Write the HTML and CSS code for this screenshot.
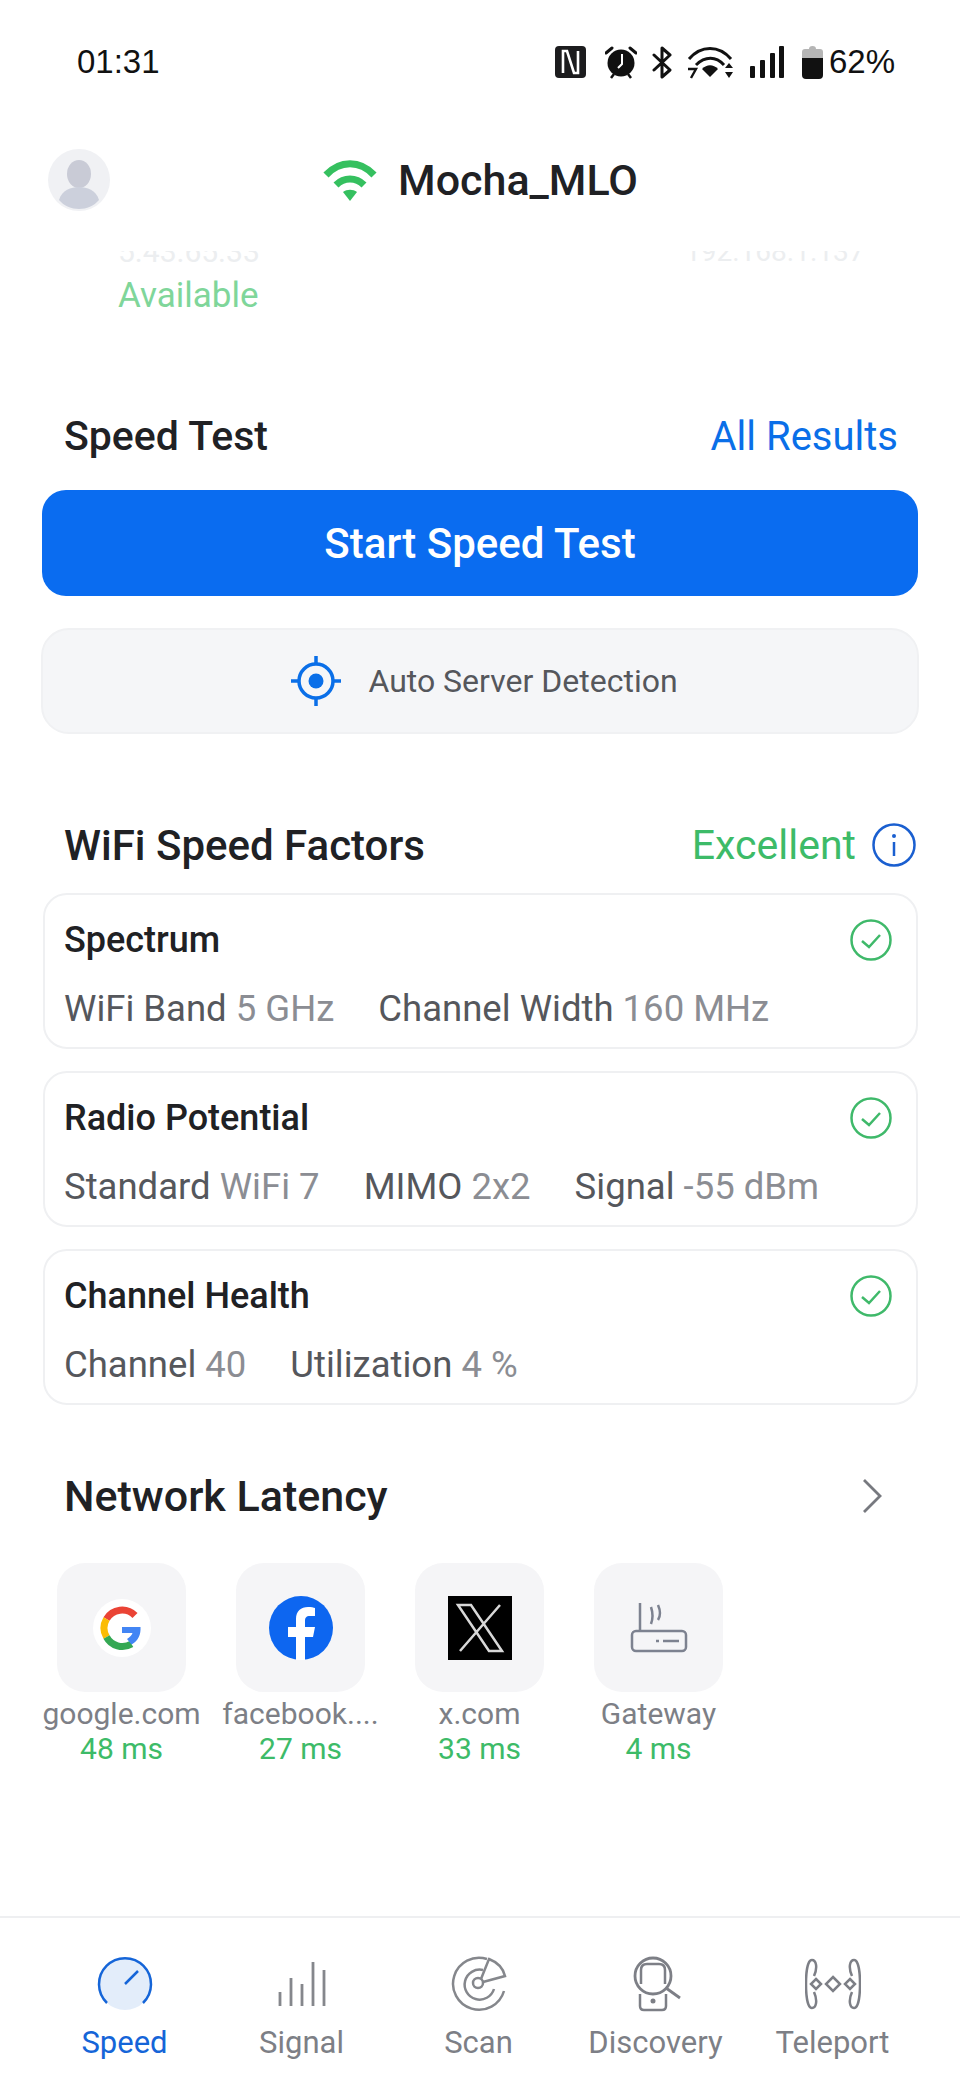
FILE: index.html
```html
<!DOCTYPE html>
<html lang="en">
<head>
    <meta charset="UTF-8">
    <title>Speed</title>
    <link rel="stylesheet" href="styles.css">
</head>
<body>
<div id="page-container">
    <div class="status-bar">
        <span class="clock">01:31</span>
        <div class="status-icons">
            <svg class="nfc" width="31" height="32" viewBox="0 0 31 32"><rect width="31" height="32" rx="4" fill="#1c1c1e"/><path d="M8 27V5h4l7 22h4V5" fill="none" stroke="#fff" stroke-width="2.6"/></svg>
            <svg class="alarm" width="32" height="33" viewBox="0 0 32 33"><path d="M1 7l6-5M31 7l-6-5" stroke="#111" stroke-width="3" stroke-linecap="round"/><circle cx="16" cy="17" r="13.5" fill="#111"/><path d="M6 32l3-4M26 32l-3-4" stroke="#111" stroke-width="2.5"/><path d="M17 8v10l-4 4" stroke="#fff" stroke-width="2" fill="none"/></svg>
            <svg class="bt" width="21" height="33" viewBox="0 0 21 33"><path d="M2 9l16 15-8 7V2l8 7L2 24" fill="none" stroke="#111" stroke-width="3" stroke-linejoin="round" stroke-linecap="round"/></svg>
            <svg class="wifi7" width="50" height="33" viewBox="0 0 50 33"><path d="M2 13C14 -1 32 -1 44 13M9 19c9-9 20-9 28 0" fill="none" stroke="#111" stroke-width="3"/><path d="M15 23c5-5 11-5 16 0l-8 8z" fill="#111"/><path d="M38 22l4-5 4 5zM38 26l4 6 4-6z" fill="#111"/><path d="M1 23h8l-5 9" fill="none" stroke="#111" stroke-width="2.4"/></svg>
            <svg class="signal" width="34" height="32" viewBox="0 0 34 32"><rect y="20" width="5" height="12" rx="1" fill="#111"/><rect x="10" y="14" width="5" height="18" rx="1" fill="#111"/><rect x="20" y="7" width="5" height="25" rx="1" fill="#111"/><rect x="29" width="5" height="32" rx="1" fill="#111"/></svg>
            <svg class="battery" width="21" height="34" viewBox="0 0 21 34"><path d="M0 13V7q0-3 3-3h4q0-3 3.500-3t3.500 3h4q3 0 3 3v6z" fill="#b5b5b5"/><path d="M0 13h21v17q0 4-4 4H4q-4 0-4-4z" fill="#111"/></svg>
            <span class="percent">62%</span>
        </div>
    </div>

    <div class="top-bar">
        <div class="avatar">
            <svg width="62" height="62" viewBox="0 0 62 62"><circle cx="31" cy="31" r="31" fill="#f0f1f4"/><ellipse cx="31" cy="25" rx="12" ry="14" fill="#c9cbd6"/><path d="M11 51c3-10 12-13 20-13s17 3 20 13c-10 12-30 12-40 0z" fill="#ccd0dc"/></svg>
        </div>
        <div class="network-name">
            <svg width="56" height="42" viewBox="0 0 56 42"><path d="M4 16c14-15 34-15 48 0" fill="none" stroke="#35c05f" stroke-width="7"/><path d="M14 26c8-8 20-8 28 0" fill="none" stroke="#35c05f" stroke-width="7"/><path d="M21 33c4-3 10-3 14 0l-7 9z" fill="#35c05f"/></svg>
            <span>Mocha_MLO</span>
        </div>
    </div>

    <div class="peek">
        <div class="peek-col peek-left">
            <span class="peek-ip">5.43.65.33</span>
            <span class="peek-state">Available</span>
        </div>
        <div class="peek-col peek-right">
            <span class="peek-ip">192.168.1.137</span>
        </div>
    </div>

    <div class="section-head speed-head">
        <h2>Speed Test</h2>
        <span class="link">All Results</span>
    </div>
    <button class="start-btn">Start Speed Test</button>
    <div class="server-row">
        <svg width="52" height="52" viewBox="0 0 52 52"><circle cx="26" cy="26" r="17" fill="none" stroke="#0a6fe8" stroke-width="3.500"/><circle cx="26" cy="26" r="7.500" fill="#0a6fe8"/><path d="M26 1v9M26 42v9M1 26h9M42 26h9" stroke="#0a6fe8" stroke-width="3.500"/></svg>
        <span>Auto Server Detection</span>
    </div>

    <div class="section-head factors-head">
        <h2>WiFi Speed Factors</h2>
        <div class="rating">
            <span>Excellent</span>
            <svg width="44" height="44" viewBox="0 0 44 44"><circle cx="22" cy="22" r="20.500" fill="none" stroke="#1a5fd0" stroke-width="2.500"/><circle cx="22" cy="13" r="2" fill="#1a5fd0"/><path d="M22 19v14" stroke="#1a5fd0" stroke-width="2.500"/></svg>
        </div>
    </div>

    <div class="cards">
        <div class="card">
            <div class="card-title">
                <h3>Spectrum</h3>
                <svg class="check" width="42" height="42" viewBox="0 0 42 42"><circle cx="21" cy="21" r="19.500" fill="none" stroke="#3fb96a" stroke-width="2.500"/><path d="M12 22l7 6 11-12" fill="none" stroke="#3fb96a" stroke-width="2.500"/></svg>
            </div>
            <div class="card-stats">
                <span>WiFi Band <em>5 GHz</em></span>
                <span>Channel Width <em>160 MHz</em></span>
            </div>
        </div>
        <div class="card">
            <div class="card-title">
                <h3>Radio Potential</h3>
                <svg class="check" width="42" height="42" viewBox="0 0 42 42"><circle cx="21" cy="21" r="19.500" fill="none" stroke="#3fb96a" stroke-width="2.500"/><path d="M12 22l7 6 11-12" fill="none" stroke="#3fb96a" stroke-width="2.500"/></svg>
            </div>
            <div class="card-stats">
                <span>Standard <em>WiFi 7</em></span>
                <span>MIMO <em>2x2</em></span>
                <span>Signal <em>-55 dBm</em></span>
            </div>
        </div>
        <div class="card">
            <div class="card-title">
                <h3>Channel Health</h3>
                <svg class="check" width="42" height="42" viewBox="0 0 42 42"><circle cx="21" cy="21" r="19.500" fill="none" stroke="#3fb96a" stroke-width="2.500"/><path d="M12 22l7 6 11-12" fill="none" stroke="#3fb96a" stroke-width="2.500"/></svg>
            </div>
            <div class="card-stats">
                <span>Channel <em>40</em></span>
                <span>Utilization <em>4 %</em></span>
            </div>
        </div>
    </div>

    <div class="section-head latency-head">
        <h2>Network Latency</h2>
        <svg width="24" height="38" viewBox="0 0 24 38"><path d="M4 3l16 16L4 35" fill="none" stroke="#77797f" stroke-width="2.800"/></svg>
    </div>

    <div class="latency-grid">
        <div class="latency-item">
            <div class="tile">
                <svg width="58" height="58" viewBox="0 0 58 58"><circle cx="29" cy="29" r="29" fill="#fff"/><path d="M42 16.500A18 18 0 0 0 13.500 20" fill="none" stroke="#ea4335" stroke-width="7"/><path d="M13.500 20a18 18 0 0 0 0 18" fill="none" stroke="#fbbc05" stroke-width="7"/><path d="M13.500 38a18 18 0 0 0 25 7" fill="none" stroke="#34a853" stroke-width="7"/><path d="M29 28h18.500c.500 7-2 14-9 17.500l-4.500-5.500c3-2 5-4 5.500-6H29z" fill="#4285f4"/></svg>
            </div>
            <span class="host">google.com</span>
            <span class="ms">48 ms</span>
        </div>
        <div class="latency-item">
            <div class="tile">
                <svg width="64" height="64" viewBox="0 0 64 64"><circle cx="32" cy="32" r="32" fill="#0d66f0"/><path d="M27 64V41h-8V31h8v-8c0-8 5-12 12-12 3 0 6 .500 7 1v8h-5c-4 0-5 2-5 5v6h10l-2 10h-8v23z" fill="#fff"/></svg>
            </div>
            <span class="host">facebook....</span>
            <span class="ms">27 ms</span>
        </div>
        <div class="latency-item">
            <div class="tile">
                <svg width="64" height="64" viewBox="0 0 64 64"><rect width="64" height="64" fill="#000"/><path d="M10 9h13l31 46H41zM52 9L12 55" fill="none" stroke="#d8d8d8" stroke-width="2.500"/></svg>
            </div>
            <span class="host">x.com</span>
            <span class="ms">33 ms</span>
        </div>
        <div class="latency-item">
            <div class="tile">
                <svg width="58" height="54" viewBox="0 0 58 54"><rect x="2" y="30" width="54" height="20" rx="4" fill="none" stroke="#7d8290" stroke-width="2.500"/><path d="M10 30V2M21 6q3 9 0 17M28 4q4 9 0 15" fill="none" stroke="#7d8290" stroke-width="2.500"/><path d="M26 40h3M33 40h16" stroke="#7d8290" stroke-width="2.500"/></svg>
            </div>
            <span class="host">Gateway</span>
            <span class="ms">4 ms</span>
        </div>
    </div>

    <div class="tab-bar">
        <div class="tab active">
            <svg width="56" height="56" viewBox="0 0 56 56"><circle cx="28" cy="28" r="26" fill="#e3edfa"/><path d="M10 47A26 26 0 1 1 46 47" fill="none" stroke="#1565d8" stroke-width="2.500"/><path d="M28 28l13-13" stroke="#1565d8" stroke-width="2.500"/></svg>
            <span>Speed</span>
        </div>
        <div class="tab">
            <svg width="50" height="44" viewBox="0 0 50 44"><path d="M4 30v14M15 16v28M26 22v22M37 0v44M48 8v36" stroke="#85878c" stroke-width="2.800" transform="translate(-1 0)"/></svg>
            <span>Signal</span>
        </div>
        <div class="tab">
            <svg width="56" height="56" viewBox="0 0 56 56"><path d="M36 3A26 26 0 1 0 53 35" fill="none" stroke="#85878c" stroke-width="2.500"/><path d="M32 14A15 15 0 1 0 43 33" fill="none" stroke="#85878c" stroke-width="2.500"/><circle cx="27" cy="27" r="5" fill="none" stroke="#85878c" stroke-width="2.500"/><path d="M30 23L38 3q13 5 16 17L32 26" fill="none" stroke="#85878c" stroke-width="2.500"/></svg>
            <span>Scan</span>
        </div>
        <div class="tab">
            <svg width="50" height="56" viewBox="0 0 50 56"><circle cx="22" cy="20" r="18" fill="none" stroke="#7d7f86" stroke-width="2.800"/><path d="M10 28V14q0-6 6-6h12q6 0 6 6v14" fill="none" stroke="#7d7f86" stroke-width="2.500"/><path d="M9 38v12q0 4 4 4h18q4 0 4-4V38" fill="none" stroke="#7d7f86" stroke-width="2.500"/><circle cx="22" cy="45" r="2.500" fill="#7d7f86"/><path d="M35 32l14 10" stroke="#7d7f86" stroke-width="2.800"/></svg>
            <span>Discovery</span>
        </div>
        <div class="tab">
            <svg width="56" height="50" viewBox="0 0 56 50"><path d="M9 17C13 8 11 1 7 1S1 11 1 25s2 24 6 24 6-7 2-16" fill="none" stroke="#7d7f86" stroke-width="2.500"/><path d="M47 17C43 8 45 1 49 1s6 10 6 24-2 24-6 24-6-7-2-16" fill="none" stroke="#7d7f86" stroke-width="2.500"/><path d="M11 20l5 5-5 5-5-5zM45 20l5 5-5 5-5-5zM28 18l7 7-7 7-7-7z" fill="none" stroke="#7d7f86" stroke-width="2.500"/></svg>
            <span>Teleport</span>
        </div>
    </div>
</div>
</body>
</html>
```

FILE: styles.css
```css
* {
    box-sizing: border-box;
}

body {
    margin: 0;
    background-color: #ffffff;
    color: #202124;
    font-family: Roboto, "Noto Sans", sans-serif;
}

#page-container {
    display: flex;
    flex-flow: column nowrap;
    width: 960px;
    height: 2092px;
    overflow: hidden;
}

/* status bar */
.status-bar {
    display: flex;
    justify-content: space-between;
    align-items: center;
    height: 34px;
    margin-top: 45px;
    padding: 0 65px 0 77px;
    font-family: "Liberation Sans", sans-serif;
    font-size: 33px;
    color: #111111;
}

.status-icons {
    display: flex;
    align-items: center;
}

.nfc,
.alarm,
.bt,
.wifi7,
.signal,
.battery {
    flex: none;
}

.alarm {
    margin-left: 19px;
}

.bt {
    margin-left: 15px;
}

.wifi7 {
    margin-left: 14px;
}

.signal {
    margin-left: 13px;
}

.battery {
    margin-left: 18px;
}

.percent {
    margin-left: 6px;
}

/* top bar */
.top-bar {
    display: grid;
    grid-template-columns: 1fr auto 1fr;
    align-items: center;
    height: 62px;
    margin-top: 70px;
    padding-left: 48px;
}

.avatar {
    height: 62px;
}

.network-name {
    display: flex;
    align-items: center;
    gap: 20px;
    font-size: 43px;
    font-weight: 500;
    margin-left: -48px;
}

/* list scrolled under the header */
.peek {
    display: flex;
    height: 72px;
    margin-top: 40px;
    overflow: hidden;
    font-size: 35px;
}

.peek-col {
    display: flex;
    flex-flow: column nowrap;
    align-items: flex-start;
}

.peek-left {
    padding-left: 118px;
    width: 685px;
}

.peek-ip {
    height: 31px;
    line-height: 30px;
    margin-top: -14px;
    color: #eceef0;
    font-size: 30px;
}

.peek-right .peek-ip {
    font-size: 28px;
}

.peek-state {
    line-height: 46px;
    margin-top: 5px;
    color: #7fd69a;
}

/* sections */
.section-head {
    display: flex;
    justify-content: space-between;
    align-items: center;
    padding: 0 64px;
}

.section-head h2 {
    margin: 0;
    font-size: 41px;
    font-weight: 500;
    color: #202124;
}

.speed-head {
    height: 50px;
    margin-top: 88px;
    padding-right: 62px;
}

.link {
    font-size: 40px;
    color: #0a6fe8;
}

.start-btn {
    height: 106px;
    margin: 29px 42px 0 42px;
    border: none;
    border-radius: 24px;
    background-color: #0a6cf0;
    color: #ffffff;
    font-family: inherit;
    font-size: 42px;
    font-weight: 500;
}

.server-row {
    display: flex;
    justify-content: center;
    align-items: center;
    gap: 26px;
    height: 106px;
    margin: 32px 41px 0 41px;
    padding-left: 8px;
    border: 2px solid #f0f1f3;
    border-radius: 28px;
    background-color: #f5f6f8;
    font-size: 32px;
    color: #55575c;
}

.factors-head {
    height: 50px;
    margin-top: 86px;
    padding-right: 44px;
}

.factors-head h2 {
    font-size: 42px;
}

.rating {
    display: flex;
    align-items: center;
    gap: 16px;
    font-size: 41px;
    color: #3dbb68;
}

.cards {
    display: flex;
    flex-flow: column nowrap;
    gap: 22px;
    margin: 23px 42px 0 43px;
}

.card {
    height: 156px;
    padding: 24px 24px 0 19px;
    border: 2px solid #eff0f2;
    border-radius: 24px;
}

.card-title {
    display: flex;
    justify-content: space-between;
    align-items: center;
    height: 42px;
}

.card-title h3 {
    margin: 0;
    font-size: 36px;
    font-weight: 500;
    color: #202124;
}

.card-stats {
    display: flex;
    gap: 44px;
    margin-top: 26px;
    font-size: 36.500px;
    color: #55575c;
}

.card-stats em {
    font-style: normal;
    color: #8b8d93;
}

.latency-head {
    height: 50px;
    margin-top: 66px;
    padding-right: 76px;
}

.latency-head h2 {
    font-size: 43px;
}

.latency-grid {
    display: grid;
    grid-template-columns: repeat(4, 179px);
    margin-top: 42px;
    padding-left: 32px;
}

.latency-item {
    display: flex;
    flex-flow: column nowrap;
    align-items: center;
}

.tile {
    display: flex;
    justify-content: center;
    align-items: center;
    width: 129px;
    height: 129px;
    border-radius: 28px;
    background-color: #f5f5f7;
}

.host {
    margin-top: 4px;
    font-size: 30px;
    line-height: 36px;
    white-space: nowrap;
    color: #7d7f86;
}

.ms {
    font-size: 30px;
    line-height: 34px;
    color: #3dbb68;
}

/* bottom tabs */
.tab-bar {
    display: grid;
    grid-template-columns: repeat(5, 177px);
    height: 176px;
    margin-top: auto;
    padding: 38px 0 0 36px;
    border-top: 2px solid #eeeff1;
}

.tab {
    display: flex;
    flex-flow: column nowrap;
    align-items: center;
    font-size: 31px;
    color: #7d7f86;
}

.tab svg {
    height: 56px;
    margin-bottom: 12px;
}

.tab.active {
    color: #1565d8;
}
```
